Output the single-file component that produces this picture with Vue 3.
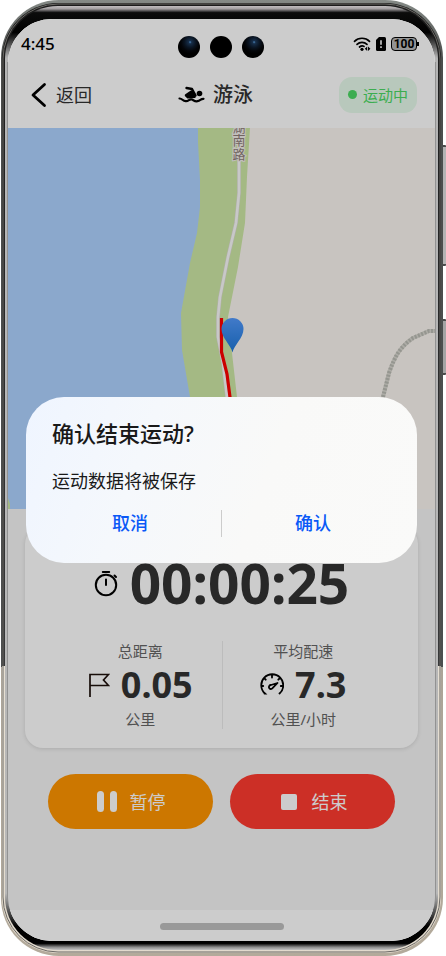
<script setup>
import { ref } from 'vue'

const confirming = ref(true)
const time = '00:00:25'
const stats = [
  { label: '总距离', value: '0.05', unit: '公里', icon: 'flag' },
  { label: '平均配速', value: '7.3', unit: '公里/小时', icon: 'gauge' },
]
</script>

<template>
  <div class="device">
    <svg class="frame" viewBox="0 0 446 956" preserveAspectRatio="none" aria-hidden="true">
      <defs>
        <linearGradient id="shell" x1="0" y1="0" x2="0" y2="1">
          <stop offset="0" stop-color="#858a86" />
          <stop offset="0.06" stop-color="#4c4e4d" />
          <stop offset="0.698" stop-color="#4c4e4f" />
          <stop offset="0.698" stop-color="#aca498" />
          <stop offset="1" stop-color="#b3aa9b" />
        </linearGradient>
        <linearGradient id="rim" x1="0" y1="0" x2="0" y2="1">
          <stop offset="0" stop-color="#1c1c1c" />
          <stop offset="0.698" stop-color="#38393a" />
          <stop offset="0.698" stop-color="#e6dfd3" />
          <stop offset="1" stop-color="#e2dacd" />
        </linearGradient>
        <linearGradient id="bezel" x1="0" y1="6" x2="0" y2="950" gradientUnits="userSpaceOnUse">
          <stop offset="0" stop-color="#c2bec0" />
          <stop offset="0.003" stop-color="#a39fa1" />
          <stop offset="0.007" stop-color="#0c0c0c" />
          <stop offset="0.028" stop-color="#000" />
          <stop offset="0.055" stop-color="#b4b4b4" />
          <stop offset="0.94" stop-color="#b8b8b8" />
          <stop offset="0.975" stop-color="#000" />
          <stop offset="0.993" stop-color="#000" />
          <stop offset="0.997" stop-color="#8c8c8c" />
          <stop offset="1" stop-color="#c4c4c4" />
        </linearGradient>
      </defs>
      <rect x="440" y="145" width="6" height="121" rx="1" fill="#4b4b4b" />
      <rect x="443" y="147" width="3" height="117" fill="#b4b4b4" />
      <rect x="440" y="319" width="6" height="56" rx="1" fill="#4b4b4b" />
      <rect x="443" y="321" width="3" height="52" fill="#a4a4a4" />
      <rect x="1" y="0" width="442" height="956" rx="58" fill="url(#shell)" />
      <rect x="2" y="3" width="439" height="950" rx="56" fill="url(#rim)" />
      <rect x="3" y="4" width="437" height="948" rx="55" fill="none" stroke="#6b6965" stroke-width="1" />
      <rect x="5" y="6" width="433" height="944" rx="53" fill="url(#bezel)" />
      <path d="M7.500 62V900M435.500 62V900" stroke="#929292" stroke-width="1" />
    </svg>

    <main class="screen">
      <div class="status">
        <span class="clock">4:45</span>
        <div class="cameras">
          <span class="lens glass"></span>
          <span class="lens"></span>
          <span class="lens glass"></span>
        </div>
        <div class="signals">
          <svg width="18" height="16" viewBox="0 0 18 16" fill="none" stroke="#000" stroke-width="1.700" stroke-linecap="round">
            <path d="M1.500 5.300C5.500 1.200 12.500 1.200 16.500 5.300M4 8.400C6.800 5.600 11.200 5.600 14 8.400M6.500 11C8 9.700 10 9.700 11 10.400" />
            <circle cx="9" cy="13.300" r="1.600" fill="#000" stroke="none" />
            <path d="M14.200 10.500 11.800 12.800l2.400 2.300M15 10.500l2.400 2.300-2.400 2.300z" fill="#000" stroke="none" />
          </svg>
          <svg width="10" height="14" viewBox="0 0 10 14">
            <path d="M3 0H8.500Q10 0 10 1.500V12.500Q10 14 8.500 14H1.500Q0 14 0 12.500V3z" fill="#000" />
            <path d="M5 3.200V7.800M5 9.300V11" stroke="#fff" stroke-width="1.600" />
          </svg>
          <span class="battery">100</span>
        </div>
      </div>

      <header class="topbar">
        <button class="back" type="button">
          <svg width="16" height="26" viewBox="0 0 16 26" fill="none" stroke="#000" stroke-width="2.800" stroke-linecap="round" stroke-linejoin="round">
            <path d="M13.500 2.500 2 13l11.500 10.500" />
          </svg>
          <span>返回</span>
        </button>
        <h1 class="title">
          <svg width="27" height="18" viewBox="0 0 27 18" fill="none" stroke="#000" stroke-linecap="round" stroke-linejoin="round">
            <circle cx="21.500" cy="7.500" r="2.800" fill="#000" stroke="none" />
            <path d="M8.500 2 14 3 17.500 9.500" stroke-width="2.400" />
            <path d="M13.500 5.500 8 9.300l2 2 6.500-.500z" fill="#000" stroke-width="2.500" />
            <path d="M1.500 12.500C4.500 12.300 4.500 15.500 8 15.200 11 15 11.500 12.500 14 13.500 16 14.500 17 15.700 19.500 15.200 22.500 14.700 22.500 12.700 25.500 12.800" stroke-width="2.200" />
          </svg>
          <span>游泳</span>
        </h1>
        <div class="badge"><i class="dot"></i>运动中</div>
      </header>

      <svg class="map" viewBox="0 0 427 381" preserveAspectRatio="xMidYMid slice" role="img" aria-label="湖南路">
        <defs>
          <linearGradient id="pin" x1="0" y1="0" x2="0" y2="1">
            <stop offset="0" stop-color="#5299fc" />
            <stop offset="1" stop-color="#1d78d8" />
          </linearGradient>
        </defs>
        <rect x="-200" width="900" height="381" fill="#fbf6f0" />
        <path d="M-200 0H200V381H-200z" fill="#aed3ff" />
        <path d="M190 0V14L192 52V79L189 105 182 135 173 185 174 222 182 269 200 381H245L229 269 224 225 220 189 230 139 237 95 239 49 242 0z" fill="#cee8a6" />
        <path d="M0 370 2 376V381H0z" fill="#cee8a6" />
        <path d="M231 0V65L228 95 220 129 212 169 210 189V209L215 235 219 269 225 300" fill="none" stroke="#dedbd8" stroke-width="3.600" stroke-linejoin="round" />
        <path d="M231 0V65L228 95 220 129 212 169 210 189V209L215 235 219 269 225 300" fill="none" stroke="#fbfbfb" stroke-width="2.600" stroke-linejoin="round" />
        <path d="M375 269 381 245Q385 233 390 225 396 216 405 210L421 203H427" fill="none" stroke="#d9d7d0" stroke-width="4" />
        <path d="M375 269 381 245Q385 233 390 225 396 216 405 210L421 203H427" fill="none" stroke="#bbbcb4" stroke-width="4" stroke-dasharray="2 1.500" />
        <path d="M213.500 190V224L219 246 222 269V290" fill="none" stroke="#f00" stroke-width="3.200" />
        <path d="M224.500 224.500C223 217 213.500 210 213.500 201A11 11 0 0 1 235.500 201C235.500 210 226 217 224.500 224.500z" fill="url(#pin)" />
        <g class="road" text-anchor="middle">
          <text x="231" y="4">湖</text>
          <text x="231" y="17">南</text>
          <text x="231" y="31">路</text>
        </g>
      </svg>

      <section class="content">
        <div class="card">
          <div class="timer">
            <svg width="24" height="28" viewBox="0 0 24 28" fill="none" stroke="#000" stroke-width="2" stroke-linecap="round">
              <circle cx="12" cy="16" r="10.200" />
              <path d="M8.800 3H15.200M12 10.500V16M20.500 6.500 22 8" />
            </svg>
            <strong>{{ time }}</strong>
          </div>
          <div class="stats">
            <div v-for="s in stats" :key="s.label" class="stat">
              <span class="caption">{{ s.label }}</span>
              <div class="reading">
                <svg v-if="s.icon === 'flag'" width="22" height="26" viewBox="0 0 22 26" fill="none" stroke="#1d100b" stroke-width="1.700">
                  <path d="M2 25V2.500H20.500L15.500 8 20.500 13.500H2" />
                </svg>
                <svg v-else width="24" height="24" viewBox="0 0 24 24" fill="none" stroke="#000" stroke-width="1.800" stroke-linecap="round">
                  <path d="M4.500 20.500H5A11 11 0 1 1 19.500 20.500M12 2V4.500M1.500 13H3.200M20.800 13H22.500M4.500 5.500 5.700 6.700M19.500 5.500 18.300 6.700" />
                  <path d="M17.500 10 12.500 15.200A2 2 0 1 1 11 12z" stroke-linejoin="round" />
                </svg>
                <strong>{{ s.value }}</strong>
              </div>
              <span class="caption">{{ s.unit }}</span>
            </div>
          </div>
        </div>

        <div class="actions">
          <button class="action pause" type="button">
            <svg width="22" height="22" viewBox="0 0 22 22" fill="#fff">
              <rect x="1" y="0" width="7" height="21" rx="3.500" />
              <rect x="14" y="0" width="7" height="21" rx="3.500" />
            </svg>
            暂停
          </button>
          <button class="action stop" type="button" @click="confirming = true">
            <svg width="22" height="22" viewBox="0 0 22 22" fill="#fff">
              <rect x="3" y="3" width="16" height="16" rx="2" />
            </svg>
            结束
          </button>
        </div>
      </section>

      <footer class="homebar"><span class="handle"></span></footer>

      <div v-if="confirming" class="backdrop">
        <section class="dialog" role="dialog" aria-modal="true" aria-labelledby="ask">
          <h2 id="ask">确认结束运动?</h2>
          <p>运动数据将被保存</p>
          <div class="choices">
            <button type="button" @click="confirming = false">取消</button>
            <i class="rule"></i>
            <button type="button" @click="confirming = false">确认</button>
          </div>
        </section>
      </div>
    </main>
  </div>
</template>

<style>
body {
  background: #fff;
}
</style>

<style scoped>
* {
  box-sizing: border-box;
}

.device {
  position: relative;
  display: flex;
  min-height: 100vh;
  padding: 19px 11px 15px 8px;
  font-family: "Noto Sans", "Noto Sans CJK SC", sans-serif;
  color: #333;
}

.frame {
  position: absolute;
  inset: 0;
  width: 100%;
  height: 100%;
}

.screen {
  position: relative;
  flex: 1;
  display: flex;
  flex-direction: column;
  overflow: hidden;
  border-radius: 44px;
  background: #f5f5f5;
}

button {
  border: 0;
  padding: 0;
  background: none;
  font: inherit;
  color: inherit;
  cursor: pointer;
}

h1,
h2,
p {
  margin: 0;
}

svg {
  flex: none;
}

.status {
  display: grid;
  grid-template-columns: 1fr auto 1fr;
  align-items: center;
  height: 42px;
  padding: 8px 15px 0 13px;
  background: #fff;
}

.clock {
  font-size: 17px;
  font-weight: 500;
  line-height: 20px;
  color: #000;
}

.cameras {
  display: flex;
  gap: 10px;
  padding-top: 6px;
}

.lens {
  width: 22px;
  height: 22px;
  border-radius: 50%;
  background: #000;
}

.glass {
  background: radial-gradient(circle at 55% 28%, #5aa0e0 0, #1d3a5c 8%, #0d1a2b 28%, #05070b 45%, #000 60%);
}

.signals {
  display: flex;
  align-items: center;
  justify-content: flex-end;
  gap: 5px;
}

.battery {
  position: relative;
  width: 26px;
  margin-right: 3px;
  border: 1px solid #000;
  border-radius: 4px;
  background: #b8b8b8;
  font-family: Roboto, sans-serif;
  font-size: 12px;
  font-weight: 700;
  line-height: 12px;
  text-align: center;
  color: #000;
}

.battery::after {
  content: "";
  position: absolute;
  top: 4px;
  right: -3px;
  width: 2px;
  height: 4px;
  background: #000;
}

.topbar {
  display: flex;
  align-items: center;
  justify-content: space-between;
  height: 67px;
  padding: 0 18px 0 23px;
  background: #fff;
}

.back {
  display: flex;
  align-items: center;
  gap: 9px;
  font-size: 18px;
  line-height: 24px;
}

.title {
  display: flex;
  align-items: center;
  gap: 8px;
  font-size: 20px;
  font-weight: 500;
  line-height: 28px;
}

.badge {
  display: flex;
  align-items: center;
  gap: 6px;
  height: 36px;
  padding: 0 9px;
  border-radius: 13px;
  background: #e7fbeb;
  font-size: 15px;
  line-height: 20px;
  color: #4cd964;
}

.dot {
  width: 9px;
  height: 9px;
  border-radius: 50%;
  background: #4cd964;
}

.map {
  display: block;
  width: 100%;
  height: 381px;
}

.road {
  font-size: 13px;
  fill: #8f7f7a;
  stroke: #f3efec;
  stroke-width: 2px;
  paint-order: stroke;
}

.content {
  flex: 1;
  padding: 17px;
}

.card {
  padding: 25px 34px 19px;
  border-radius: 18px;
  background: #fff;
  box-shadow: 0 1px 4px rgba(0, 0, 0, 0.12);
}

.timer {
  display: flex;
  align-items: center;
  justify-content: center;
  gap: 12px;
  margin-bottom: 26px;
}

.timer strong {
  font-size: 55px;
  line-height: 64px;
}

.stats {
  display: grid;
  grid-template-columns: 1fr 1fr;
}

.stat {
  display: flex;
  flex-direction: column;
  align-items: center;
}

.stat + .stat {
  border-left: 1px solid #ebebeb;
}

.caption {
  font-size: 15px;
  line-height: 20px;
  color: #666;
}

.reading {
  display: flex;
  align-items: center;
  gap: 11px;
}

.reading strong {
  font-size: 36px;
  line-height: 48px;
}

.actions {
  display: flex;
  gap: 17px;
  padding: 26px 23px;
}

.action {
  flex: 1;
  display: flex;
  align-items: center;
  justify-content: center;
  gap: 12px;
  height: 55px;
  border-radius: 28px;
  font-size: 18px;
  line-height: 24px;
  color: #fff;
}

.pause {
  background: #ff9500;
}

.stop {
  background: #ff3b30;
}

.homebar {
  display: flex;
  justify-content: center;
  height: 31px;
  padding-top: 13px;
  background: #fff;
}

.handle {
  width: 124px;
  height: 7px;
  border-radius: 4px;
  background: #c0c0c0;
}

.backdrop {
  position: absolute;
  inset: 0;
  display: flex;
  align-items: center;
  justify-content: center;
  padding: 0 18px;
  background: rgba(0, 0, 0, 0.2);
}

.dialog {
  flex: 1;
  padding: 20px 26px;
  border-radius: 38px;
  background: linear-gradient(110deg, #eff5ff 0%, #f5f8fc 30%, #f9f9f8 60%, #fafaf9 100%);
  color: #191919;
}

.dialog h2 {
  font-size: 22px;
  font-weight: 500;
  line-height: 32px;
}

.dialog p {
  margin-top: 20px;
  font-size: 18px;
  line-height: 24px;
}

.choices {
  display: flex;
  align-items: center;
  margin: 10px -13px 0;
}

.choices button {
  flex: 1;
  height: 40px;
  font-size: 18px;
  font-weight: 500;
  line-height: 24px;
  color: #0a59f7;
}

.rule {
  width: 1px;
  height: 27px;
  background: #ccc;
}
</style>
